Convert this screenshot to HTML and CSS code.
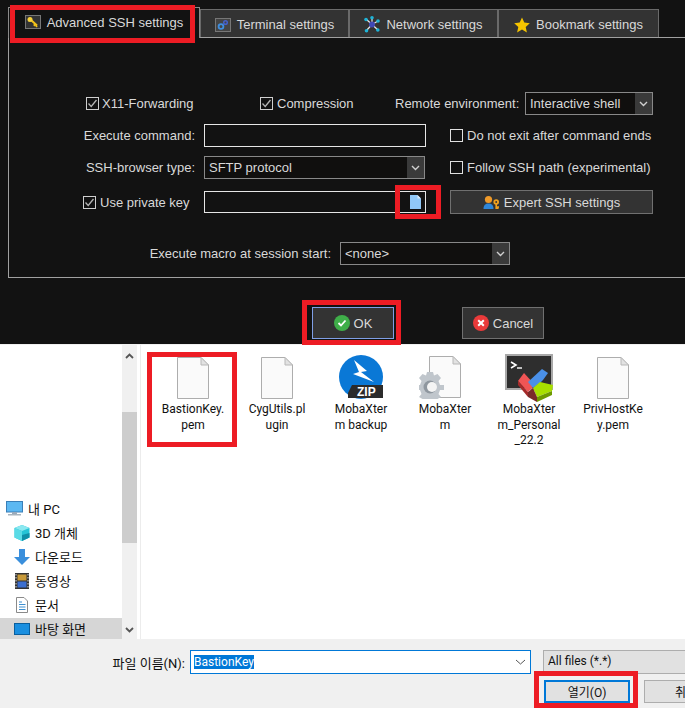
FILE: index.html
```html
<!DOCTYPE html>
<html lang="ko">
<head>
  <meta charset="UTF-8">
  <title>SSH settings</title>
  <link rel="stylesheet" href="styles.css">
</head>
<body>

  <svg class="defs">
    <symbol id="checked" viewBox="0 0 13 13">
      <rect x="0.5" y="0.5" width="12" height="12" fill="none" stroke="#cfcfcf"/>
      <path d="M2.5 6.5 5.2 9.5 10.5 3" fill="none" stroke="#b5b5b5" stroke-width="1.3"/>
    </symbol>
    <symbol id="chev" viewBox="0 0 9 6">
      <path d="M1 1 4.5 4.5 8 1" fill="none" stroke="#d0d0d0" stroke-width="1.4"/>
    </symbol>
    <symbol id="page" viewBox="0 0 32 42">
      <path d="M0.5 0.5H24L31.5 8V41.5H0.5Z" fill="#fafafa" stroke="#adadad"/>
      <path d="M24 0.5V8H31.5Z" fill="#e2e2e2" stroke="#b8b8b8"/>
    </symbol>
  </svg>

  <div class="dark">
    <div class="tabs">
      <div class="tab tab-active">
        <svg class="ico" width="16" height="14" viewBox="0 0 16 14">
          <rect x="0.5" y="0.5" width="15" height="13" fill="#333" stroke="#777"/>
          <path d="M6 5 12 10.5M10 9.5 8.8 10.8M12 10.5 10.8 11.8" stroke="#f2c21a" stroke-width="2"/>
          <circle cx="5" cy="4.5" r="2.5" fill="#f7d23c"/>
        </svg>
        Advanced SSH settings
      </div>
      <div class="tab">
        <svg class="ico" width="16" height="14" viewBox="0 0 16 14">
          <rect x="0.5" y="0.5" width="15" height="13" fill="#444" stroke="#777"/>
          <circle cx="6" cy="8.5" r="2.4" fill="none" stroke="#3f8fe0" stroke-width="1.8"/>
          <circle cx="10.5" cy="4.5" r="1.8" fill="none" stroke="#4560c8" stroke-width="1.5"/>
        </svg>
        Terminal settings
      </div>
      <div class="tab">
        <svg class="ico" width="16" height="17" viewBox="0 0 16 17">
          <path d="M8 8.5 2 3M8 8.5 8 1.5M8 8.5 14 5M8 8.5 14 14M8 8.5 2 15" stroke="#e8e8e8" stroke-width="1.2"/>
          <circle cx="8" cy="8.5" r="3" fill="#3f48b5"/>
          <circle cx="2" cy="3.5" r="1.8" fill="#1fb4d8"/>
          <circle cx="8" cy="1.8" r="1.8" fill="#1fb4d8"/>
          <circle cx="14" cy="5" r="1.8" fill="#1fb4d8"/>
          <circle cx="13.8" cy="14" r="1.8" fill="#1fb4d8"/>
          <circle cx="2.5" cy="14.8" r="1.8" fill="#1fb4d8"/>
        </svg>
        Network settings
      </div>
      <div class="tab tab-last">
        <svg class="ico" width="16" height="16" viewBox="0 0 16 16">
          <path d="M8 0.5 10.3 5.6 15.8 6.2 11.7 9.9 12.9 15.4 8 12.6 3.1 15.4 4.3 9.9 0.2 6.2 5.7 5.6Z" fill="#f5c400"/>
        </svg>
        Bookmark settings
      </div>
    </div>

    <div class="panel">
      <div class="row row-first">
        <label class="check check-x11"><svg class="box" width="13" height="13"><use href="#checked"/></svg>X11-Forwarding</label>
        <label class="check check-comp"><svg class="box" width="13" height="13"><use href="#checked"/></svg>Compression</label>
        <span class="remote-label">Remote environment:</span>
        <div class="select select-remote"><span>Interactive shell</span><i class="arrow"><svg width="9" height="6"><use href="#chev"/></svg></i></div>
      </div>

      <div class="row">
        <span class="field-label">Execute command:</span>
        <div class="input"></div>
        <label class="check"><span class="box box-empty"></span>Do not exit after command ends</label>
      </div>

      <div class="row">
        <span class="field-label">SSH-browser type:</span>
        <div class="select select-browser"><span>SFTP protocol</span><i class="arrow"><svg width="9" height="6"><use href="#chev"/></svg></i></div>
        <label class="check check-follow"><span class="box box-empty"></span>Follow SSH path (experimental)</label>
      </div>

      <div class="row row-key">
        <label class="check field-key"><svg class="box" width="13" height="13"><use href="#checked"/></svg>Use private key</label>
        <div class="input input-key">
          <svg width="11" height="14" viewBox="0 0 11 14"><path d="M0 0H7.5L11 3.5V14H0Z" fill="#90c8f8"/><path d="M7.5 0V3.5H11Z" fill="#dcecfb"/></svg>
        </div>
        <div class="btn btn-expert">
          <svg width="17" height="14" viewBox="0 0 17 14">
            <path d="M0.5 14C0.5 10 2.5 8.5 5.5 8.5S10.5 10 10.5 14Z" fill="#2f86d8"/>
            <circle cx="5.5" cy="4.5" r="3.6" fill="#ef9a2a"/>
            <circle cx="13.2" cy="7" r="2.8" fill="#f0a01e"/>
            <path d="M13.2 8V13.5H14.8V12H16M13.2 9" fill="none" stroke="#f0a01e" stroke-width="1.6"/>
            <circle cx="13.2" cy="7" r="0.9" fill="#333"/>
          </svg>
          Expert SSH settings
        </div>
      </div>

      <div class="row row-macro">
        <span class="field-label macro-label">Execute macro at session start:</span>
        <div class="select select-macro"><span>&lt;none&gt;</span><i class="arrow"><svg width="9" height="6"><use href="#chev"/></svg></i></div>
      </div>
    </div>

    <div class="actions">
      <div class="btn btn-action btn-ok">
        <svg width="16" height="16" viewBox="0 0 16 16"><circle cx="8" cy="8" r="8" fill="#3fae49"/><path d="M4.5 8 7 10.5 11.5 5.5" fill="none" stroke="#fff" stroke-width="1.8"/></svg>
        OK
      </div>
      <div class="btn btn-action btn-cancel">
        <svg width="16" height="16" viewBox="0 0 16 16"><circle cx="8" cy="8" r="8" fill="#ea3a3a"/><path d="M5.2 5.2 10.8 10.8M10.8 5.2 5.2 10.8" stroke="#fff" stroke-width="2"/></svg>
        Cancel
      </div>
    </div>
  </div>

  <div class="browser">
    <div class="sidebar">
      <div class="nav-item nav-pc">
        <svg width="17" height="15" viewBox="0 0 17 15"><rect x="0.5" y="0.5" width="16" height="10.5" fill="#5cb8f2" stroke="#3a7fb8"/><rect x="6" y="11" width="5" height="2" fill="#9ab"/><rect x="2" y="13" width="13" height="1.5" fill="#a8b4be"/></svg>
        내 PC
      </div>
      <div class="nav-item">
        <svg width="16" height="16" viewBox="0 0 16 16"><path d="M8 0 15.5 3V12.5L8 16 .5 12.5V3Z" fill="#26c4d6"/><path d="M8 0 15.5 3 8 6 .5 3Z" fill="#8ce8f0"/><path d="M8 6V16L.5 12.5V3Z" fill="#5adbe6"/><path d="M8 10V16L15.5 12.5V8Z" fill="#0f8fa8"/></svg>
        3D 개체
      </div>
      <div class="nav-item">
        <svg width="16" height="16" viewBox="0 0 16 16"><path d="M5 0H11V8H16L8 16 0 8H5Z" fill="#3a8fdc"/></svg>
        다운로드
      </div>
      <div class="nav-item">
        <svg width="16" height="16" viewBox="0 0 16 16"><rect x="1" y="0" width="14" height="16" fill="#333"/><rect x="3.5" y="1.5" width="9" height="6" fill="#c89a3a"/><rect x="3.5" y="8.5" width="9" height="6" fill="#3c6fd0"/><path d="M2 1V15M14 1V15" stroke="#ddd" stroke-dasharray="1.5 1.5"/></svg>
        동영상
      </div>
      <div class="nav-item">
        <svg width="16" height="16" viewBox="0 0 16 16"><path d="M2.5 .5H10L13.5 4V15.5H2.5Z" fill="#fff" stroke="#8a8a8a"/><path d="M5 5H8M5 7.5H11.5M5 10H11.5M5 12.5H11.5" stroke="#3d8fd0"/></svg>
        문서
      </div>
      <div class="nav-item nav-current">
        <svg width="16" height="16" viewBox="0 0 16 16"><rect x="0" y="2" width="16" height="12" fill="#1a8fe0"/><rect x="0.5" y="2.5" width="15" height="11" fill="none" stroke="#0a5f9e"/></svg>
        바탕 화면
      </div>
    </div>

    <div class="scrollbar">
      <svg class="scroll-up" width="9" height="6" viewBox="0 0 9 6"><path d="M1 5 4.5 1.5 8 5" fill="none" stroke="#555" stroke-width="1.8"/></svg>
      <div class="thumb"></div>
      <svg class="scroll-down" width="9" height="6" viewBox="0 0 9 6"><path d="M1 1 4.5 4.5 8 1" fill="none" stroke="#555" stroke-width="1.8"/></svg>
    </div>

    <div class="files">
      <div class="file">
        <div class="file-icon"><svg width="32" height="42"><use href="#page"/></svg></div>
        <div class="file-name">BastionKey.<br>pem</div>
      </div>
      <div class="file">
        <div class="file-icon"><svg width="32" height="42"><use href="#page"/></svg></div>
        <div class="file-name">CygUtils.pl<br>ugin</div>
      </div>
      <div class="file">
        <div class="file-icon">
          <svg width="44" height="44" viewBox="0 0 44 44">
            <circle cx="22" cy="22" r="22" fill="#0a78d6"/>
            <path d="M15 5 28 16 22 17 35 27 14 19 20 17Z" fill="#fff"/>
            <path d="M9 38 13 30H44V43H9Z" fill="#2b2b2b"/>
            <text x="18" y="41" class="zip">ZIP</text>
          </svg>
        </div>
        <div class="file-name">MobaXter<br>m backup</div>
      </div>
      <div class="file">
        <div class="file-icon">
          <svg class="icon-tall" width="52" height="46" viewBox="0 0 52 46">
            <path d="M10.5 3.5H34L41.5 11V44.5H10.5Z" fill="#fafafa" stroke="#adadad"/>
            <path d="M34 3.5V11H41.5Z" fill="#e2e2e2" stroke="#b8b8b8"/>
            <path d="M8 19H14L15 22.5 18.5 21 22 25 19.5 28 21 32H25V37H21L19.5 41 22 44 18.5 46 3.5 46 0 44 2.5 41 1 37H0V32H1L2.5 28 0 25 3.5 21 7 22.5Z" fill="#c0c6cc"/>
            <circle cx="11" cy="34" r="6.5" fill="#8f979f"/>
            <circle cx="13" cy="34" r="5" fill="#f4f4f4"/>
          </svg>
        </div>
        <div class="file-name">MobaXter<br>m</div>
      </div>
      <div class="file">
        <div class="file-icon">
          <svg class="icon-moba" width="48" height="48" viewBox="0 0 48 48">
            <rect x="1" y="1" width="46" height="34" fill="#2e2e2e" stroke="#a8a8a8" stroke-width="2"/>
            <path d="M6 8 11 11 6 14" fill="none" stroke="#fff" stroke-width="1.6"/>
            <path d="M12 14H17" stroke="#fff" stroke-width="1.4"/>
            <path d="M13 27 19 19 30 31 23 38Z" fill="#f05555"/>
            <path d="M13 27V31L23 43V38Z" fill="#a52a2a"/>
            <path d="M23 28 37 15 43 19 38 26 35 29 28 34Z" fill="#4a90e8"/>
            <path d="M28 34 35 28 48 31 47 37 32 43Z" fill="#a8e000"/>
            <path d="M32 43 47 37 47 41 32 48Z" fill="#6e9a00"/>
            <path d="M23 38 28 34 32 43V48L23 43Z" fill="#7a2a2a"/>
          </svg>
        </div>
        <div class="file-name">MobaXter<br>m_Personal<br>_22.2</div>
      </div>
      <div class="file">
        <div class="file-icon"><svg width="32" height="42"><use href="#page"/></svg></div>
        <div class="file-name">PrivHostKe<br>y.pem</div>
      </div>
    </div>
  </div>

  <div class="footer">
    <div class="footer-row">
      <span class="name-label">파일 이름(N):</span>
      <div class="name-input">
        <span class="selected">BastionKey</span>
        <svg width="11" height="6" viewBox="0 0 11 6"><path d="M1 1 5.5 5 10 1" fill="none" stroke="#555"/></svg>
      </div>
      <div class="filter">All files (*.*)</div>
    </div>
    <div class="footer-row footer-buttons">
      <div class="win-btn win-btn-open">열기(O)</div>
      <div class="win-btn win-btn-cancel">취소(C)</div>
    </div>
  </div>

  <!-- red marks drawn over the screenshot -->
  <div class="mark mark-tab"></div>
  <div class="mark mark-browse"></div>
  <div class="mark mark-ok"></div>
  <div class="mark mark-file"></div>
  <div class="mark mark-open"></div>

</body>
</html>
```

FILE: styles.css
```css
* {
  box-sizing: border-box;
}

body {
  position: relative;
  width: 685px;
  height: 708px;
  margin: 0;
  overflow: hidden;
  font-family: "Liberation Sans", Arial, sans-serif;
  font-size: 13px;
}

svg {
  flex-shrink: 0;
}

.defs {
  display: none;
}

/* top half: dark session dialog */
.dark {
  height: 344px;
  background-color: #121212;
  color: #d9d9d9;
}

.tabs {
  display: flex;
  align-items: flex-end;
  height: 37px;
  padding-left: 8px;
}

.tab {
  display: flex;
  align-items: center;
  justify-content: center;
  gap: 6px;
  width: 149px;
  height: 28px;
  padding-top: 2px;
  background-color: #333;
  border: 1px solid #6a6a6a;
  border-bottom: none;
}

.tab-active {
  position: relative;
  width: 192px;
  height: 31px;
  padding-top: 0;
  padding-bottom: 2px;
  background-color: #121212;
  border-color: #8a8a8a;
  margin-bottom: -1px;
}

.tab-last {
  width: 161px;
}

.panel {
  height: 241px;
  margin-left: 8px;
  padding-top: 54px;
  border: 1px solid #a0a0a0;
  border-right: none;
}

.row {
  display: flex;
  align-items: center;
  height: 23px;
  margin-bottom: 9px;
}

.row-first {
  padding-left: 77px;
}

.row-key {
  height: 24px;
  margin-top: 11px;
  margin-bottom: 28px;
}

.row-macro {
  margin-bottom: 0;
}

.check {
  display: flex;
  align-items: center;
  gap: 4px;
  padding-bottom: 1px;
}

.box {
  display: block;
  width: 13px;
  height: 13px;
}

.box-empty {
  border: 1px solid #e0e0e0;
}

.check-x11 {
  width: 174px;
  gap: 3px;
}

.check-comp {
  width: 135px;
}

.remote-label {
  width: 130px;
  padding-bottom: 1px;
}

.field-label {
  display: flex;
  justify-content: flex-end;
  width: 186px;
  margin-right: 9px;
  padding-bottom: 1px;
}

.macro-label {
  width: 322px;
}

.field-key {
  width: 186px;
  margin-right: 9px;
  padding-left: 74px;
  padding-bottom: 0;
}

.input {
  width: 222px;
  height: 23px;
  margin-right: 24px;
  border: 1px solid #e6e6e6;
}

.input-key {
  display: flex;
  align-items: center;
  justify-content: flex-end;
  height: 22px;
  padding-right: 4px;
}

.select {
  display: flex;
  align-items: center;
  justify-content: space-between;
  height: 23px;
  padding-left: 4px;
  border: 1px solid #888;
  background-color: #100f0e;
}

.select span {
  padding-bottom: 1px;
}

.select-remote {
  width: 128px;
}

.select-browser {
  width: 221px;
  margin-right: 25px;
}

.select-macro {
  width: 170px;
}

.arrow {
  display: flex;
  align-items: center;
  justify-content: center;
  width: 17px;
  height: 100%;
  background-color: #3a3a3a;
}

.btn {
  display: flex;
  align-items: center;
  justify-content: center;
  gap: 4px;
  background-color: #333;
  border: 1px solid #707070;
}

.btn-expert {
  width: 203px;
  height: 24px;
}

.actions {
  display: flex;
  padding-top: 29px;
  padding-left: 312px;
}

.btn-action {
  gap: 4px;
  width: 82px;
  height: 32px;
}

.btn-ok {
  border-color: #7f9fe6;
}

.btn-cancel {
  margin-left: 68px;
}

/* bottom half: windows file picker */
.browser {
  display: flex;
  height: 295px;
  background-color: #fff;
  color: #111;
  font-family: Roboto, "Noto Sans CJK KR", sans-serif;
  font-size: 12px;
  border-top: 1px solid #f0f0f0;
}

.sidebar {
  display: flex;
  flex-direction: column;
  justify-content: flex-end;
  gap: 3px;
  width: 122px;
  font-size: 13px;
}

.nav-item {
  display: flex;
  align-items: center;
  gap: 5px;
  height: 21px;
  padding-left: 14px;
}

.nav-pc {
  padding-left: 6px;
}

.nav-current {
  background-color: #d6d6d6;
}

.scrollbar {
  display: flex;
  flex-direction: column;
  align-items: center;
  width: 15px;
  background-color: #f0f0f0;
}

.scroll-up {
  margin-top: 8px;
}

.thumb {
  width: 100%;
  height: 131px;
  margin-top: 53px;
  background-color: #cdcdcd;
}

.scroll-down {
  margin-top: auto;
  margin-bottom: 6px;
}

.files {
  display: flex;
  align-items: flex-start;
  flex: 1;
  margin-left: 3px;
  padding-left: 10px;
  padding-top: 8px;
  border-left: 1px solid #ececec;
}

.file {
  width: 84px;
  text-align: center;
}

.file-icon {
  display: flex;
  align-items: flex-end;
  justify-content: center;
  height: 46px;
  margin-bottom: 3px;
}

.icon-moba {
  margin-bottom: -3px;
}

.file-name {
  line-height: 15.5px;
}

.zip {
  fill: #fff;
  font-family: "Liberation Sans", Arial, sans-serif;
  font-size: 12px;
  font-weight: bold;
}

.footer {
  height: 69px;
  padding-top: 11px;
  background-color: #f0f0f0;
  color: #111;
  font-family: Roboto, "Noto Sans CJK KR", sans-serif;
  font-size: 12px;
  overflow: hidden;
}

.footer-row {
  display: flex;
  align-items: center;
  height: 24px;
}

.name-label {
  width: 185px;
  font-size: 13px;
  text-align: right;
  flex-shrink: 0;
}

.name-input {
  display: flex;
  align-items: center;
  justify-content: space-between;
  flex-shrink: 0;
  width: 341px;
  height: 24px;
  margin-left: 5px;
  padding: 0 4px 0 3px;
  background-color: #fff;
  border: 1px solid #0078d7;
}

.selected {
  background-color: #0078d7;
  color: #fff;
}

.filter {
  flex-shrink: 0;
  width: 160px;
  height: 24px;
  margin-left: 12px;
  padding: 3px 4px;
  background-color: #e1e1e1;
  border: 1px solid #adadad;
}

.footer-buttons {
  height: 23px;
  margin-top: 6px;
  padding-left: 544px;
}

.win-btn {
  display: flex;
  align-items: center;
  justify-content: center;
  flex-shrink: 0;
  width: 86px;
  height: 23px;
  margin-right: 14px;
  background-color: #e1e1e1;
  border: 1px solid #adadad;
}

.win-btn-open {
  border: 2px solid #0078d7;
}

.win-btn-cancel {
  width: 100px;
}

.mark {
  position: absolute;
  border: 5px solid #ed1c24;
}

.mark-tab {
  left: 10px;
  top: 5px;
  width: 185px;
  height: 38px;
}

.mark-browse {
  left: 395px;
  top: 185px;
  width: 46px;
  height: 34px;
}

.mark-ok {
  left: 302px;
  top: 300px;
  width: 99px;
  height: 45px;
}

.mark-file {
  left: 147px;
  top: 352px;
  width: 90px;
  height: 95px;
}

.mark-open {
  left: 534px;
  top: 671px;
  width: 104px;
  height: 37px;
}
```
